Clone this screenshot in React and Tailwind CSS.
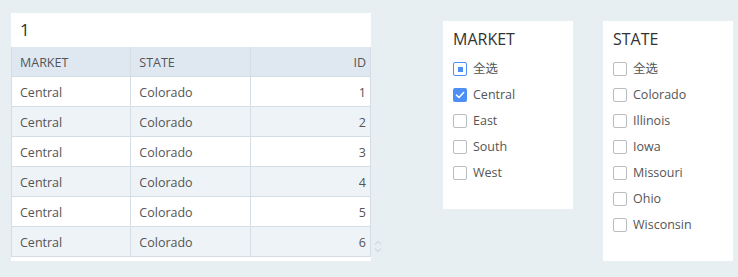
import React from "react";

const rows = [1, 2, 3, 4, 5, 6];

function Box({ state }) {
  if (state === "checked") {
    return (
      <span className="flex h-[14px] w-[14px] items-center justify-center rounded-[2px] bg-[#4d8ff5]">
        <svg width="10" height="10" viewBox="0 0 9 9" fill="none">
          <path d="M1.3 4.6 L3.6 6.8 L7.8 2.2" stroke="white" strokeWidth="1.3" strokeLinecap="round" strokeLinejoin="round" />
        </svg>
      </span>
    );
  }
  if (state === "partial") {
    return (
      <span className="flex h-[14px] w-[14px] items-center justify-center rounded-[2px] border border-[#4d8ff5] bg-white">
        <span className="h-[5px] w-[5px] bg-[#4d8ff5]" />
      </span>
    );
  }
  return <span className="h-[14px] w-[14px] rounded-[2px] border border-[#b9bdc2] bg-white" />;
}

function FilterPanel({ title, items, h }) {
  return (
    <div className={`w-[130px] bg-white pl-[10px] pt-[8px] ${h}`}>
      <div className="text-[16px] leading-[20px] text-[#333]">{title}</div>
      <div className="mt-[7px] flex flex-col">
        {items.map(([label, st]) => (
          <div key={label} className="flex h-[26px] items-center gap-[6px]">
            <Box state={st} />
            <span className="pt-[1px] text-[12.5px] text-[#555]">{label}</span>
          </div>
        ))}
      </div>
    </div>
  );
}

const cell = "flex h-[30px] items-center border-b border-[#d5dde5] pt-[3px]";

export default function App() {
  return (
    <div
      className="flex h-[277px] w-[738px] items-start bg-[#e8eff3]"
      style={{ fontFamily: '"Open Sans", "Noto Sans CJK SC", sans-serif' }}
    >
      <div className="ml-[11px] mt-[13px] h-[248px] w-[360px] bg-white">
        <div className="h-[34px] pl-[9px] pt-[6px] text-[17px] leading-[22px] text-[#333]">1</div>
        <div className="grid grid-cols-3 border-x border-[#d5dde5] text-[12.5px] text-[#555]">
          <div className={`${cell} border-r bg-[#dfe8f1] pl-[8px]`}>MARKET</div>
          <div className={`${cell} border-r bg-[#dfe8f1] pl-[8px]`}>STATE</div>
          <div className={`${cell} justify-end bg-[#dfe8f1] pr-[4px]`}>ID</div>
          {rows.map((r) => {
            const bg = r % 2 === 0 ? "bg-[#eef3f7]" : "bg-white";
            return (
              <React.Fragment key={r}>
                <div className={`${cell} border-r pl-[8px] ${bg}`}>Central</div>
                <div className={`${cell} border-r pl-[8px] ${bg}`}>Colorado</div>
                <div className={`${cell} justify-end pr-[4px] ${bg}`}>{r}</div>
              </React.Fragment>
            );
          })}
        </div>
      </div>
      <div className="ml-[3px] mt-[240px] w-[69px]">
        <svg width="8" height="13" viewBox="0 0 8 13" fill="none">
          <path d="M1 4.5 L4 1.5 L7 4.5" stroke="#c4cbd1" strokeWidth="1" />
          <path d="M1 8.5 L4 11.5 L7 8.5" stroke="#c4cbd1" strokeWidth="1" />
        </svg>
      </div>
      <div className="mt-[21px]">
        <FilterPanel
          title="MARKET"
          h="h-[188px]"
          items={[
            ["全选", "partial"],
            ["Central", "checked"],
            ["East", ""],
            ["South", ""],
            ["West", ""],
          ]}
        />
      </div>
      <div className="ml-[30px] mt-[21px]">
        <FilterPanel
          title="STATE"
          h="h-[240px]"
          items={[
            ["全选", ""],
            ["Colorado", ""],
            ["Illinois", ""],
            ["Iowa", ""],
            ["Missouri", ""],
            ["Ohio", ""],
            ["Wisconsin", ""],
          ]}
        />
      </div>
    </div>
  );
}
